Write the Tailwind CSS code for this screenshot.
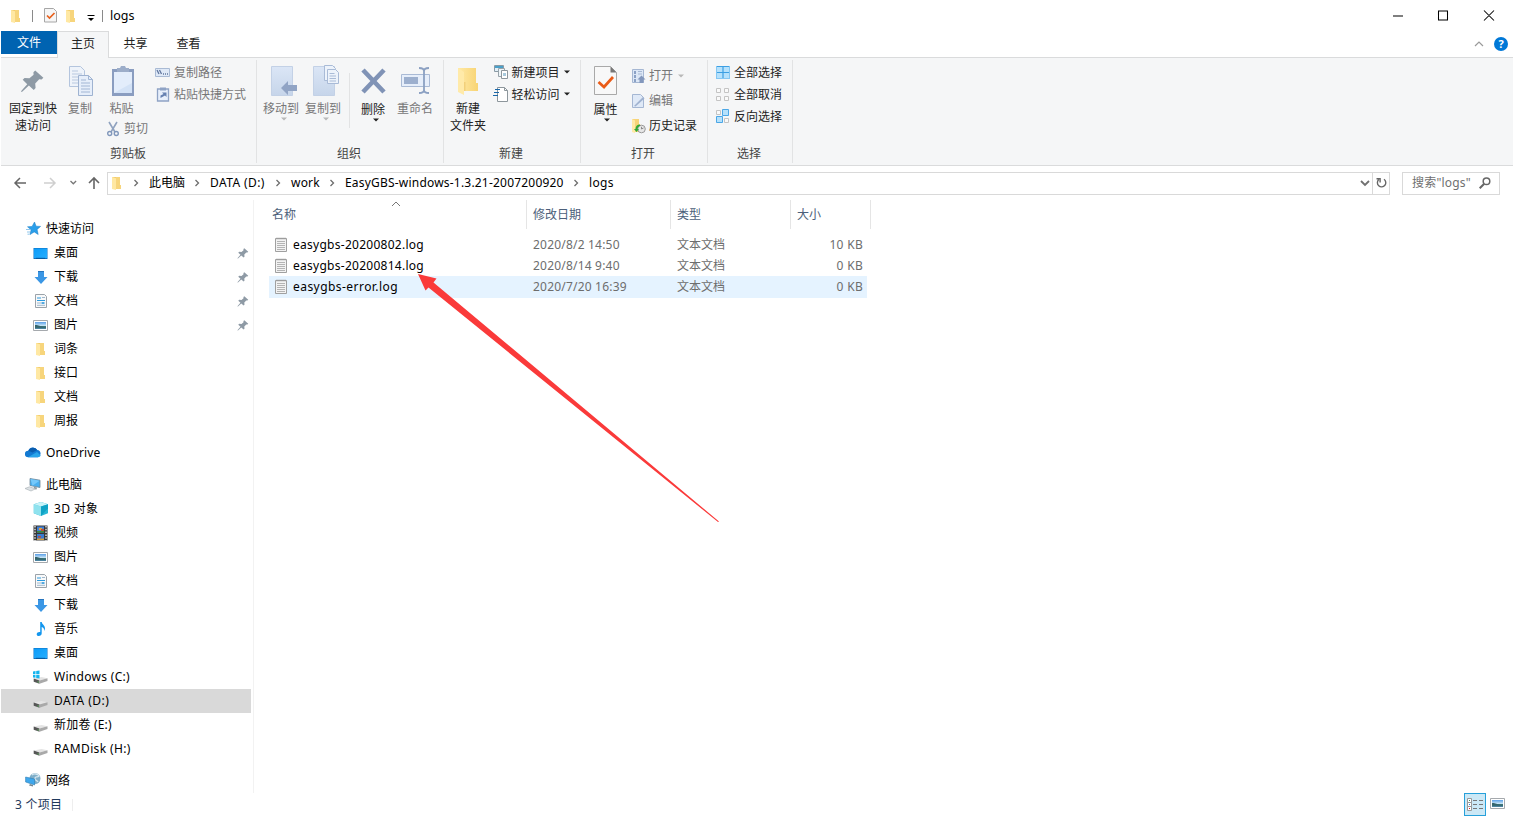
<!DOCTYPE html>
<html lang="zh-CN">
<head>
    <meta charset="UTF-8">
    <meta name="viewport" content="width=device-width, initial-scale=1.0">
    <title>logs</title>
    <script src="https://cdn.jsdelivr.net/npm/@tailwindcss/browser@4"></script>
</head>
<body class="bg-white">
    <!-- Icon library -->
    <svg class="absolute size-0">
        <linearGradient id="gFolder" x1="0" x2="1"><stop offset="0" stop-color="#ffe9a6"/><stop offset="1" stop-color="#f8d474"/></linearGradient>
        <linearGradient id="gBlue" x1="0" y1="0" x2="1" y2="1"><stop offset="0" stop-color="#0d9bf7"/><stop offset="1" stop-color="#25aeff"/></linearGradient>
        <linearGradient id="gSky" x1="0" y1="0" x2="0" y2="1"><stop offset="0" stop-color="#5a9fe8"/><stop offset=".5" stop-color="#c4e2f5"/><stop offset=".6" stop-color="#3f7a78"/><stop offset="1" stop-color="#4f86a8"/></linearGradient>
        <linearGradient id="gPage" x1="0" y1="0" x2="0" y2="1"><stop offset="0" stop-color="#dbe6f6"/><stop offset="1" stop-color="#c6d5ea"/></linearGradient>
        <symbol id="folder" viewBox="0 0 16 16"><path d="M3 2h6v8l3 .5V14H3z" fill="#f3cc6c"/><path d="M7 2h4v8h1v4H6z" fill="#f7d57c"/><path d="M3 2l4 1.300v11.700L3 14z" fill="#ffe8a3"/></symbol>
        <symbol id="pin" viewBox="0 0 16 16"><path d="M9.500 2.500l4.500 4-1 1-1.300-.2-2.200 2.400.2 2.500-1 1L6 10.800 2.300 14.200l-.6.2.2-.7L5.100 10 2.600 7.600l1-1 2.700.2 2.300-2-.1-1.300z" fill="#8e9aa5"/></symbol>
        <symbol id="desktop" viewBox="0 0 16 16"><path d="M.5 3h14v11H.5z" fill="#0a6fc2"/><path d="M1 3.500h13v9.500H1z" fill="url(#gBlue)"/><path d="M3 13.300h9" stroke="#064e8c" stroke-width=".8"/></symbol>
        <symbol id="download" viewBox="0 0 16 16"><path d="M5 2h6v6h3.500L8 15 1.500 8H5z" fill="#3b97e5"/><path d="M5 2h6v1H5z" fill="#2775be"/></symbol>
        <symbol id="doc" viewBox="0 0 16 16"><path d="M2.500 1.500h9l2 2v11h-11z" fill="#f8f9fa" stroke="#9ba3aa"/><path d="M4 5h4M4 7.500h8" stroke="#2b9be0" stroke-width="1.200"/><path d="M9 4.500h3M4 10h4M4 12.300h8" stroke="#9fb8cc"/><path d="M8.500 9h3v2h-3z" fill="#53a8df"/></symbol>
        <symbol id="picture" viewBox="0 0 16 16"><path d="M.5 3.500h14v10H.5z" fill="#fff" stroke="#a5a9ad"/><path d="M2 5h11v7H2z" fill="url(#gSky)"/><path d="M2 8c3-.5 4 1.500 11 1.800v1H2z" fill="#35656d"/></symbol>
        <symbol id="star" viewBox="0 0 16 16"><path d="M9.500 1l1.600 4.200 4.500.2-3.500 3 1.100 5.100-4-2.600L5 13.600l1.100-4.800-3.600-3 4.600-.4z" fill="#2a9fea" stroke="#167bc4" stroke-width=".5"/><path d="M1 8.500h4M2 11h3M2.500 13.200h2" stroke="#73b9e7" stroke-width=".8"/></symbol>
        <symbol id="cloud" viewBox="0 0 16 12"><path d="M3 11.200a3.200 3.200 0 0 1 .2-6.500A5 5 0 0 1 12.300 4a3.700 3.700 0 0 1 .7 7.200z" fill="#1379d2"/><path d="M3.400 4.700A5 5 0 0 1 12.200 4L7.500 6.500z" fill="#0a5cae"/><path d="M3 11.200L12 6l3.700 3.500c-.6 1.200-1.500 1.700-2.700 1.700z" fill="#28a4ea"/></symbol>
        <symbol id="computer" viewBox="0 0 16 16"><path d="M5 1.500l10 1.700v7.300L5 8.500z" fill="#48aff0" stroke="#6c8798" stroke-width=".8"/><path d="M5.500 2l9 1.700-7 5z" fill="#75c8fa"/><path d="M9 10l3 .6-.5 2-3-.5z" fill="#859299"/><path d="M0 11.500l4.500-1.700 6 2L6 14z" fill="#dde2e5" stroke="#a4acb1" stroke-width=".6"/></symbol>
        <symbol id="cube" viewBox="0 0 16 16"><path d="M.8 3.200L8 1l7 2.200v9L8 15 .8 12.200z" fill="#27b6d4"/><path d="M.8 3.200L8 5.500V15L.8 12.200z" fill="#8fe2ee"/><path d="M.8 3.200L8 1l7 2.200-7 2.300z" fill="#c9f3f8"/><path d="M8 5.500l7-2.300v4L8 15z" fill="#0fa3c6"/></symbol>
        <symbol id="video" viewBox="0 0 16 16"><path d="M.5.500h14v15H.5z" fill="#383838"/><path d="M2 1v15M13 1v15" stroke="#d7d7d7" stroke-width="1.500" stroke-dasharray="1.500 1.300"/><path d="M4 1.500h7v6H4z" fill="#4381d6"/><path d="M4 9h7v6H4z" fill="#397bd2"/><path d="M4 6h7v1.500H4z" fill="#3f8a3a"/><path d="M6 3h3v2H6z" fill="#e6a23c"/><path d="M8 4h3v2H8zM5 11h3v1.500H5z" fill="#bd4b3a"/><path d="M4 13.500h7V15H4z" fill="#cf9c3f"/></symbol>
        <symbol id="music" viewBox="0 0 16 16"><path d="M7.200 1h1.500c.4 2.500 3.500 3.500 3.300 6.500-.1 1-.5 1.800-1 2.500.5-2.300-.8-3.500-2.300-4v6.500c0 1.500-1.300 2.500-2.800 2.500S3.500 14 3.700 12.900c.2-1.200 1.700-2.200 3.500-1.800z" fill="#1296ee"/></symbol>
        <symbol id="drive" viewBox="0 0 16 16"><path d="M.7 9.500L8.500 8l6 1.300-8 2.200z" fill="#e4e4e4"/><path d="M.7 9.500l5.800 2v3.300l-5.800-2z" fill="#565656"/><path d="M6.500 11.500l8-2.200v2.800l-8 2.700z" fill="#a9a9a9"/><path d="M4.600 13h1.200" stroke="#62d267"/></symbol>
        <symbol id="windrive" viewBox="0 0 16 16"><use href="#drive"/><path d="M0 2.500l2.500-.4v3H0zM3.200 2l3.300-.5v3.600H3.200zM0 5.800h2.500v3L0 8.400zM3.200 5.800h3.300v3.600l-3.300-.5z" fill="#14b4ee"/></symbol>
        <symbol id="network" viewBox="0 0 16 16"><circle cx="10" cy="6.500" r="5.500" fill="#7faec8"/><path d="M7 3c2-2 6-1 7 1-2 2-3-.5-4 2s2 2 3 4" stroke="#d5e6ef" stroke-width="1.300" fill="none"/><path d="M.6 5l9 2v6L.6 10z" fill="#3fa7ec" stroke="#2d7db4" stroke-width=".6"/><path d="M5 12l3 1v1.500l-4-1z" fill="#74858f"/></symbol>
        <symbol id="textfile" viewBox="0 0 14 16"><path d="M1.500 1.500h11v13h-11z" fill="#f3f3f3" stroke="#a0a0a0"/><path d="M3 4.500h8M3 6.500h8M3 8.500h8M3 10.500h8M3 12.500h8" stroke="#b4b4b4"/><path d="M3 .5v2M5 .5v2M7 .5v2M9 .5v2M11 .5v2" stroke="#999" stroke-width=".8"/></symbol>
        <symbol id="propsmall" viewBox="0 0 13 15"><path d="M.5.500h9l3 3v10.500H.5z" fill="#f6f6f6" stroke="#a6a6a6"/><path d="M3 7.500l2.500 2.500L10.500 5" fill="none" stroke="#e8601c" stroke-width="1.700"/></symbol>
        <symbol id="chev" viewBox="0 0 6 8"><path d="M1.500 1l3 3-3 3" fill="none" stroke="#6d6d6d" stroke-width="1.300"/></symbol>
        <symbol id="caret" viewBox="0 0 6 4"><path d="M0 .5h6l-3 3z" fill="currentColor"/></symbol>
    </svg>

    <div class="flex flex-col w-[1513px] h-[817px] pl-px overflow-hidden text-[12px] leading-[17px] text-black font-['Noto_Sans','Noto_Sans_CJK_SC',sans-serif] whitespace-nowrap">
        <!-- Title bar -->
        <header class="flex items-center h-[31px] shrink-0 pl-[7px]">
            <svg class="size-4"><use href="#folder"/></svg>
            <span class="w-px h-3 ml-2 bg-[#8a8a8a]"></span>
            <svg class="w-[13px] h-[15px] ml-[11px]"><use href="#propsmall"/></svg>
            <svg class="size-4 ml-1.5"><use href="#folder"/></svg>
            <svg class="w-2 h-2 ml-2 mt-1" viewBox="0 0 8 8"><path d="M.5 1.500h7" stroke="#000"/><path d="M1 4h6L4 7z"/></svg>
            <span class="w-px h-3 ml-[7px] bg-[#8a8a8a]"></span>
            <span class="ml-[7px] text-[12.500px]">logs</span>
            <svg class="w-[102px] h-3 ml-auto mr-[18px]" viewBox="0 0 102 12"><path d="M0 6h10M45.500 1h9v9h-9zM91 .5l10 10M101 .5l-10 10" fill="none" stroke="#000" stroke-width="1.050"/></svg>
        </header>

        <!-- Ribbon tabs -->
        <nav class="flex h-[27px] shrink-0 text-[#222] border-b border-[#dadbdc]">
            <span class="w-14 h-[23px] bg-[#0063b1] text-white text-center leading-[23px]">文件</span>
            <span class="w-[52px] h-[27px] bg-[#f5f6f7] border-x border-t border-[#dadbdc] text-center leading-[23px]">主页</span>
            <span class="w-[53px] text-center leading-[25px]">共享</span>
            <span class="w-[53px] text-center leading-[25px]">查看</span>
            <svg class="w-2.5 h-1.5 ml-auto mt-2.5" viewBox="0 0 10 6"><path d="M1 5l4-4 4 4" fill="none" stroke="#9a9a9a" stroke-width="1.200"/></svg>
            <span class="size-3.5 ml-2.5 mr-[5px] mt-1.5 rounded-full bg-[#0078d7] text-white text-[11px] leading-[14px] font-bold text-center">?</span>
        </nav>

        <!-- Ribbon -->
        <section class="flex h-[108px] shrink-0 bg-[#f5f6f7] border-b border-[#dadbdc] text-[#222]">
            <!-- Clipboard -->
            <div class="w-[256px] my-0.5 border-r border-[#e2e3e4]">
                <div class="flex h-[85px]">
                    <div class="w-[54px] ml-[5px] pt-[5px] text-center">
                        <svg class="size-8 mx-auto"><use href="#pin" x="1" y="1" width="29" height="29"/></svg>
                        <p class="mt-[3px]">固定到快<br>速访问</p>
                    </div>
                    <div class="w-10 pt-[5px] text-center text-[#777]">
                        <svg class="size-8 mx-auto" viewBox="0 0 32 32"><path d="M5.500 1.500h11l4 4v16h-15z" fill="#eef3fa" stroke="#b4c5de"/><path d="M8 6h6M8 9h10M8 12h10M8 15h10M8 18h10" stroke="#b9c9e0"/><path d="M14.500 10.500h10l4 4v16h-14z" fill="#e6eefa" stroke="#9fb3d1"/><path d="M24.500 10.500v4h4M17 15h5M17 18h9M17 21h9M17 24h9M17 27h9" fill="none" stroke="#a2b6d4"/></svg>
                        <p class="mt-[3px]">复制</p>
                    </div>
                    <div class="w-[48px] pt-[5px] text-[#777]">
                        <svg class="size-8 ml-[7px]" viewBox="0 0 32 32"><path d="M5 4h22v27H5z" fill="#8a9dc0"/><path d="M7 7h18v21H7z" fill="#e3edfb"/><path d="M7 28l18-10v10z" fill="#d3e2f6"/><path d="M10 3h3l1-2h4l1 2h3v4H10z" fill="#9cadc9"/></svg>
                        <p class="mt-[3px] pl-[9.500px]">粘贴</p>
                        <p class="flex items-center mt-[3px] pl-[7px]"><svg class="w-3 h-4 mr-[5px]" viewBox="0 0 12 16"><path d="M2 1l6 10M10 1L4 11" stroke="#8fa2bf" stroke-width="1.600"/><circle cx="2.700" cy="12.500" r="2" fill="none" stroke="#8097bb" stroke-width="1.400"/><circle cx="9.300" cy="12.500" r="2" fill="none" stroke="#8097bb" stroke-width="1.400"/></svg>剪切</p>
                    </div>
                    <div class="ml-[7px] pt-px text-[#777]">
                        <p class="flex items-center h-[22px]"><svg class="size-4 mr-[3px]" viewBox="0 0 16 16"><path d="M.5 4.500h14v8H.5z" fill="#dfe9f7" stroke="#a9bad4"/><path d="M2 6l2 4M4.500 6l2 4M8 10h1M10 10h1M12 10h1" stroke="#61779f" stroke-width="1.300"/></svg>复制路径</p>
                        <p class="flex items-center h-[22px]"><svg class="size-4 mr-[3px]" viewBox="0 0 16 16"><path d="M2.500 3h11v12h-11z" fill="#e7effb" stroke="#8fa3c5" stroke-width="1.300"/><path d="M5 1.500h6v3H5z" fill="#8fa3c5"/><path d="M5.500 12V9.500L8.500 8 7 6.500h4.500V11L10 9.500z" fill="#6580b0"/></svg>粘贴快捷方式</p>
                    </div>
                </div>
                <p class="pr-px text-center text-[#444]">剪贴板</p>
            </div>
            <!-- Organize -->
            <div class="w-[187px] my-0.5 border-r border-[#e2e3e4]">
                <div class="flex h-[85px] pl-[3px]">
                    <div class="w-[42px] pt-[5px] text-center text-[#777]">
                        <svg class="size-8 mx-auto" viewBox="0 0 32 32"><path d="M6.500 1.500h21v29h-21z" fill="url(#gPage)" stroke="#c3d1e6"/><path d="M16 23l7-7v4h9v6h-9v4z" fill="#91a4c5"/></svg>
                        <p class="mt-[3px]">移动到</p>
                        <svg class="w-1.5 h-1 ml-[21px] text-[#b8b8b8]"><use href="#caret"/></svg>
                    </div>
                    <div class="w-[42px] pt-[5px] text-center text-[#777]">
                        <svg class="size-8 mx-auto" viewBox="0 0 32 32"><path d="M6.500 1.500h21v29h-21z" fill="url(#gPage)" stroke="#c3d1e6"/><path d="M17.500.500h8l3 3v12h-11z" fill="#edf3fb" stroke="#a9bbd7"/><path d="M20.500 4.500h8l3 3v11h-11z" fill="#edf3fb" stroke="#a9bbd7"/><path d="M22.500 8.500h5M22.500 11h6.500M22.500 13.500h6.500M22.500 16h6.500" stroke="#a9bbd7"/></svg>
                        <p class="mt-[3px]">复制到</p>
                        <svg class="w-1.5 h-1 ml-[21px] text-[#b8b8b8]"><use href="#caret"/></svg>
                    </div>
                    <span class="w-px h-[55px] ml-[5px] mt-[13px] bg-[#e2e3e4]"></span>
                    <div class="w-[42px] ml-0.5 pt-[5px] text-center">
                        <svg class="size-8 mx-auto" viewBox="0 0 32 32"><path d="M6 5l21 22M27 5L6 27" stroke="#8093b6" stroke-width="4.600"/></svg>
                        <p class="mt-1">删除</p>
                        <svg class="w-1.5 h-1 ml-[21px]"><use href="#caret"/></svg>
                    </div>
                    <div class="w-[42px] pt-[5px] text-center text-[#777]">
                        <svg class="size-8 mx-auto" viewBox="0 0 32 32"><path d="M2.500 9.500h28v12h-28z" fill="#e6eefa" stroke="#a9bad5"/><path d="M5 12h14v7H5z" fill="#9cafce"/><path d="M20 3c3 0 5 1 5 3 0-2 2-3 5-3M25 5v22M20 28c3 0 5-1 5-3 0 2 2 3 5 3" fill="none" stroke="#8ba0c2" stroke-width="1.800"/></svg>
                        <p class="mt-[3px]">重命名</p>
                    </div>
                </div>
                <p class="pr-0.5 text-center text-[#444]">组织</p>
            </div>
            <!-- New -->
            <div class="w-[137px] my-0.5 border-r border-[#e2e3e4]">
                <div class="flex h-[85px]">
                    <div class="w-12 pt-[5px] text-center">
                        <svg class="size-8 mx-auto" viewBox="0 0 32 32"><path d="M6 3h18v15h2v8H6z" fill="url(#gFolder)"/><path d="M6 3l6 4v23l-6-3z" fill="#ffeaa9"/><path d="M12 17h1.500v9H12z" fill="#f2d07a"/></svg>
                        <p class="mt-[3px]">新建<br>文件夹</p>
                    </div>
                    <div class="ml-px pt-px">
                        <p class="flex items-center h-[22px]"><svg class="size-4 mr-[2.500px]" viewBox="0 0 16 16"><path d="M1.500 1.500h9v6h-9z" fill="#e2eff7" stroke="#8a9aa5"/><path d="M2 2h8v2H2z" fill="#4aa0c9"/><path d="M5.500 4.500h6v8h-6z" fill="#eef6fa" stroke="#98a3aa"/><path d="M8.500 6.500h6v8h-6z" fill="#fff" stroke="#8d969c"/><path d="M10 9h3v3h-3z" fill="#a8c9dc"/></svg>新建项目<svg class="w-1.5 h-1 ml-[4.500px]"><use href="#caret"/></svg></p>
                        <p class="flex items-center h-[22px]"><svg class="size-4 mr-[2.500px]" viewBox="0 0 16 16"><path d="M4.500 1.500h7l3 3v11h-10z" fill="#fff" stroke="#8d969c"/><path d="M11.500 1.500v3h3" fill="none" stroke="#8d969c"/><path d="M2 3.500h5M1 6.500h5M0 9.500h5" stroke="#1b68a8"/></svg>轻松访问<svg class="w-1.5 h-1 ml-[4.500px]"><use href="#caret"/></svg></p>
                    </div>
                </div>
                <p class="pr-0.5 text-center text-[#444]">新建</p>
            </div>
            <!-- Open -->
            <div class="w-[127px] my-0.5 border-r border-[#e2e3e4]">
                <div class="flex h-[85px] pl-0.5">
                    <div class="w-[45px] pt-[5px] text-center">
                        <svg class="size-8 mx-auto" viewBox="0 0 32 32"><path d="M4.500 1.500h16l6 6v22h-22z" fill="#f8f8f8" stroke="#a9a9a9"/><path d="M20.500 1.500v6h6z" fill="#777"/><path d="M8.500 17l5.500 5 9-10" fill="none" stroke="#ea5b17" stroke-width="2.700"/></svg>
                        <p class="mt-1">属性</p>
                        <svg class="w-1.5 h-1 ml-[21px]"><use href="#caret"/></svg>
                    </div>
                    <div class="ml-[3px] pt-[3px]">
                        <p class="flex items-center h-[25px] text-[#777]"><svg class="size-4 mr-[2px]" viewBox="0 0 16 16"><path d="M1.500 1.500h11v13h-11z" fill="#dce7f6" stroke="#a5b7d3"/><path d="M3 3h2v3H3zM3 7h2v3H3zM3 11h2v3H3z" fill="#8ba1c5"/><path d="M7 3.500h4M7 6h4" stroke="#a5b7d3"/><path d="M10.500 7.500l4 4h-2V15h-4v-3.500h-2z" fill="#8297bc"/></svg>打开<svg class="w-1.5 h-1 ml-[5px] text-[#b8b8b8]"><use href="#caret"/></svg></p>
                        <p class="flex items-center h-[25px] text-[#777]"><svg class="size-4 mr-[2px]" viewBox="0 0 16 16"><path d="M1.500 1.500h8l3 3v10h-11z" fill="#dfe9f7" stroke="#a5b7d3"/><path d="M3 13l9-9 1.500 1.500-9 8z" fill="#9fb2d0"/></svg>编辑</p>
                        <p class="flex items-center h-[25px]"><svg class="size-4 mr-[2px]" viewBox="0 0 16 16"><path d="M1 1h7v5l2 1v7H1z" fill="#f7d479"/><path d="M1 1l3 1.500V15l-3-1z" fill="#ffe9a5"/><circle cx="10.500" cy="11" r="3.800" fill="#e6e6e6" stroke="#999"/><path d="M10.500 8.800V11l2-1" fill="none" stroke="#777" stroke-width=".8"/><path d="M9 6.500c-3 0-4.500 2-4.500 4.500H3l2.500 3L8 11H6.500c0-1.500 1-2.500 2.500-3z" fill="#2ea836"/></svg>历史记录</p>
                    </div>
                </div>
                <p class="pr-0.5 text-center text-[#444]">打开</p>
            </div>
            <!-- Select -->
            <div class="w-[85px] my-0.5 border-r border-[#e2e3e4]">
                <div class="h-[85px] pl-[7px] pt-px">
                    <p class="flex items-center h-[22px]"><svg class="size-4 mr-[3px]" viewBox="0 0 16 16"><path d="M1 2h14v13H1z" fill="#b5e1fc"/><path d="M1 2.500h14M8 2v13M1 8.500h14" fill="none" stroke="#3c9fe3" stroke-width="1.200"/><path d="M1 14.500h14M1.500 2v13M14.500 2v13" stroke="#84c7f3"/></svg>全部选择</p>
                    <p class="flex items-center h-[22px]"><svg class="size-4 mr-[3px]" viewBox="0 0 16 16"><path d="M1.500 2.500h4v4h-4zM9.500 2.500h4v4h-4zM1.500 10.500h4v4h-4zM9.500 10.500h4v4h-4z" fill="#fafafa" stroke="#c4c4c4"/></svg>全部取消</p>
                    <p class="flex items-center h-[22px]"><svg class="size-4 mr-[3px]" viewBox="0 0 16 16"><path d="M1.500 2.500h4v4h-4zM9.500 10.500h4v4h-4z" fill="#fafafa" stroke="#c4c4c4"/><path d="M7.500 1.500h6v6h-6zM1.500 8.500h6v6h-6z" fill="#b5e1fc" stroke="#4ca7e6"/></svg>反向选择</p>
                </div>
                <p class="pr-0.5 text-center text-[#444]">选择</p>
            </div>
        </section>

        <!-- Address bar -->
        <div class="flex items-center h-[34px] shrink-0 pr-[13px]">
            <svg class="w-[89px] h-3.5 ml-3 mr-[5px]" viewBox="0 0 89 14"><path d="M13 7H2M7 2L2 7l5 5" fill="none" stroke="#666" stroke-width="1.500"/><path d="M31 7h11M37 2l5 5-5 5" fill="none" stroke="#cfcfcf" stroke-width="1.500"/><path d="M57.500 5l2.800 2.800L63.100 5" fill="none" stroke="#777" stroke-width="1.300"/><path d="M81 13V2M76 7l5-5 5 5" fill="none" stroke="#666" stroke-width="1.600"/></svg>
            <div class="flex items-center flex-1 h-[23px] border border-[#d9d9d9]">
                <svg class="size-4 ml-px mb-px"><use href="#folder"/></svg>
                <svg class="w-1.5 h-2 ml-2 mr-[10px]"><use href="#chev"/></svg>
                <span class="w-[37px] pb-0.5">此电脑</span>
                <svg class="w-1.5 h-2 ml-2 mr-[10px]"><use href="#chev"/></svg>
                <span class="w-[57px] pb-0.5 tracking-[0.4px]">DATA (D:)</span>
                <svg class="w-1.5 h-2 ml-2 mr-[10px]"><use href="#chev"/></svg>
                <span class="w-[30px] pb-0.5 tracking-[0.2px]">work</span>
                <svg class="w-1.5 h-2 ml-2 mr-[10px]"><use href="#chev"/></svg>
                <span class="w-[220px] pb-0.5 tracking-[0.2px]">EasyGBS-windows-1.3.21-2007200920</span>
                <svg class="w-1.5 h-2 ml-2 mr-[10px]"><use href="#chev"/></svg>
                <span class="pb-0.5 tracking-[0.3px]">logs</span>
                <svg class="w-2.5 h-2 ml-auto mr-[2px]" viewBox="0 0 10 8"><path d="M1 2l4 4 4-4" fill="none" stroke="#707070" stroke-width="1.800"/></svg>
                <span class="flex items-center justify-center w-[17px] h-full border-l border-[#d9d9d9]"><svg class="size-3" viewBox="0 0 12 12"><path d="M9 2.200a4.200 4.200 0 1 1-5.300.4M5.100 5.500V1.700H1.500" fill="none" stroke="#666" stroke-width="1.400"/></svg></span>
            </div>
            <div class="flex items-center w-[98px] h-[23px] ml-3 pl-[9px] border border-[#d9d9d9] text-[#707070]"><span class="pb-0.5 tracking-[0.2px]">搜索"logs"</span>
                <svg class="size-3 ml-auto mr-2" viewBox="0 0 12 12"><circle cx="7.500" cy="4.300" r="3.300" fill="none" stroke="#666" stroke-width="1.500"/><path d="M5 7l-4.300 4.300" stroke="#666" stroke-width="2"/></svg>
            </div>
        </div>

        <!-- Panes -->
        <div class="flex h-[593px] shrink-0">
            <aside class="w-[253px] pt-[17px] border-r border-[#f2f2f2]">
                <ul class="w-[250px] leading-[23px]">
                    <li class="flex h-6 pl-6"><svg class="size-4 mt-1 mr-[5px]"><use href="#star"/></svg>快速访问</li>
                    <li class="flex h-6 pl-8"><svg class="size-4 mt-1 mr-[5px]"><use href="#desktop"/></svg>桌面<svg class="size-3.5 mt-[5px] ml-auto mr-px"><use href="#pin"/></svg></li>
                    <li class="flex h-6 pl-8"><svg class="size-4 mt-1 mr-[5px]"><use href="#download"/></svg>下载<svg class="size-3.5 mt-[5px] ml-auto mr-px"><use href="#pin"/></svg></li>
                    <li class="flex h-6 pl-8"><svg class="size-4 mt-1 mr-[5px]"><use href="#doc"/></svg>文档<svg class="size-3.5 mt-[5px] ml-auto mr-px"><use href="#pin"/></svg></li>
                    <li class="flex h-6 pl-8"><svg class="size-4 mt-1 mr-[5px]"><use href="#picture"/></svg>图片<svg class="size-3.5 mt-[5px] ml-auto mr-px"><use href="#pin"/></svg></li>
                    <li class="flex h-6 pl-8"><svg class="size-4 mt-1 mr-[5px]"><use href="#folder"/></svg>词条</li>
                    <li class="flex h-6 pl-8"><svg class="size-4 mt-1 mr-[5px]"><use href="#folder"/></svg>接口</li>
                    <li class="flex h-6 pl-8"><svg class="size-4 mt-1 mr-[5px]"><use href="#folder"/></svg>文档</li>
                    <li class="flex h-6 pl-8"><svg class="size-4 mt-1 mr-[5px]"><use href="#folder"/></svg>周报</li>
                    <li class="flex h-6 mt-2 pl-6 tracking-[0.15px]"><svg class="w-4 h-3 mt-[5px] mr-[5px]"><use href="#cloud"/></svg>OneDrive</li>
                    <li class="flex h-6 mt-2 pl-6"><svg class="size-4 mt-1 mr-[5px]"><use href="#computer"/></svg>此电脑</li>
                    <li class="flex h-6 pl-8 tracking-[0.3px]"><svg class="size-4 mt-1 mr-[5px]"><use href="#cube"/></svg>3D 对象</li>
                    <li class="flex h-6 pl-8"><svg class="size-4 mt-1 mr-[5px]"><use href="#video"/></svg>视频</li>
                    <li class="flex h-6 pl-8"><svg class="size-4 mt-1 mr-[5px]"><use href="#picture"/></svg>图片</li>
                    <li class="flex h-6 pl-8"><svg class="size-4 mt-1 mr-[5px]"><use href="#doc"/></svg>文档</li>
                    <li class="flex h-6 pl-8"><svg class="size-4 mt-1 mr-[5px]"><use href="#download"/></svg>下载</li>
                    <li class="flex h-6 pl-8"><svg class="size-4 mt-1 mr-[5px]"><use href="#music"/></svg>音乐</li>
                    <li class="flex h-6 pl-8"><svg class="size-4 mt-1 mr-[5px]"><use href="#desktop"/></svg>桌面</li>
                    <li class="flex h-6 pl-8 tracking-[0.3px]"><svg class="size-4 mt-1 mr-[5px]"><use href="#windrive"/></svg>Windows (C:)</li>
                    <li class="flex h-6 pl-8 tracking-[0.45px] bg-[#d9d9d9]"><svg class="size-4 mt-1 mr-[5px]"><use href="#drive"/></svg>DATA (D:)</li>
                    <li class="flex h-6 pl-8 tracking-[0.2px]"><svg class="size-4 mt-1 mr-[5px]"><use href="#drive"/></svg>新加卷 (E:)</li>
                    <li class="flex h-6 pl-8 tracking-[0.35px]"><svg class="size-4 mt-1 mr-[5px]"><use href="#drive"/></svg>RAMDisk (H:)</li>
                    <li class="flex h-6 mt-2 pl-6"><svg class="size-4 mt-[3px] mr-[5px]"><use href="#network"/></svg>网络</li>
                </ul>
            </aside>

            <!-- File list -->
            <main class="flex-1 pl-[15px] text-[#6d6d6d]">
                <div class="grid grid-cols-[258px_144px_120px_80px] h-[29px] leading-[29px] text-[#4c607a]">
                    <span class="relative pl-[3px] border-r border-[#e5e5e5]">名称<svg class="absolute left-[122px] top-px w-2.5 h-1.5" viewBox="0 0 10 6"><path d="M1 5l4-4 4 4" fill="none" stroke="#777"/></svg></span>
                    <span class="pl-1.5 border-r border-[#e5e5e5]">修改日期</span>
                    <span class="pl-1.5 border-r border-[#e5e5e5]">类型</span>
                    <span class="pl-1.5 border-r border-[#e5e5e5]">大小</span>
                </div>
                <div class="mt-[5px] w-[598px]">
                    <div class="grid grid-cols-[264px_144px_1fr] items-center h-[21px] pr-1">
                        <span class="flex items-center pl-[5px] text-black tracking-[0.27px]"><svg class="w-3.5 h-4 mr-[5px]"><use href="#textfile"/></svg>easygbs-20200802.log</span>
                        <span class="tracking-[0.2px]">2020/8/2 14:50</span>
                        <span class="flex justify-between">文本文档<span class="tracking-[0.3px]">10 KB</span></span>
                    </div>
                    <div class="grid grid-cols-[264px_144px_1fr] items-center h-[21px] pr-1">
                        <span class="flex items-center pl-[5px] text-black tracking-[0.27px]"><svg class="w-3.5 h-4 mr-[5px]"><use href="#textfile"/></svg>easygbs-20200814.log</span>
                        <span class="tracking-[0.2px]">2020/8/14 9:40</span>
                        <span class="flex justify-between">文本文档<span class="tracking-[0.3px]">0 KB</span></span>
                    </div>
                    <div class="grid grid-cols-[264px_144px_1fr] items-center h-[22px] pr-1 pb-px bg-[#e5f3ff]">
                        <span class="flex items-center pl-[5px] text-black tracking-[0.45px]"><svg class="w-3.5 h-4 mr-[5px]"><use href="#textfile"/></svg>easygbs-error.log</span>
                        <span class="tracking-[0.2px]">2020/7/20 16:39</span>
                        <span class="flex justify-between">文本文档<span class="tracking-[0.3px]">0 KB</span></span>
                    </div>
                </div>
            </main>
        </div>

        <!-- Status bar -->
        <footer class="flex items-center h-6 shrink-0 pl-3.5 pr-[7px] text-[#1e395b]">
            <span class="pb-0.5 tracking-[0.25px]">3 个项目</span>
            <span class="w-px h-3 ml-2.5 bg-[#eee]"></span>
            <span class="flex items-center justify-center self-start w-[22px] h-[23px] ml-auto border border-[#26a0da] bg-[#cbe8f6]"><svg class="w-4 h-3.5 shrink-0" viewBox="0 0 16 14"><path d="M.5.500h4v4h-4zM.5 4.500h4v4h-4zM.5 8.500h4v4h-4z" fill="#fff" stroke="#999"/><path d="M6 2.500h4M12 2.500h4M6 6.500h4M12 6.500h4M6 10.500h4M12 10.500h4" stroke="#777"/><path d="M2 2h1v1H2z" fill="#3a8a5a"/><path d="M2 6h1v1H2z" fill="#2a7ae0"/><path d="M2 10h1v1H2z" fill="#e02020"/></svg></span>
            <svg class="size-4 ml-1 mb-1"><use href="#picture"/></svg>
        </footer>
    </div>

    <!-- Annotation arrow -->
    <svg class="absolute left-0 top-0 w-[1513px] h-[817px] pointer-events-none"><path d="M418 274L436.500 278.500 433.500 282.500 719 521.500 718 522 428.500 287.500 425.500 290.500z" fill="#fa3a3a"/></svg>
</body>
</html>
